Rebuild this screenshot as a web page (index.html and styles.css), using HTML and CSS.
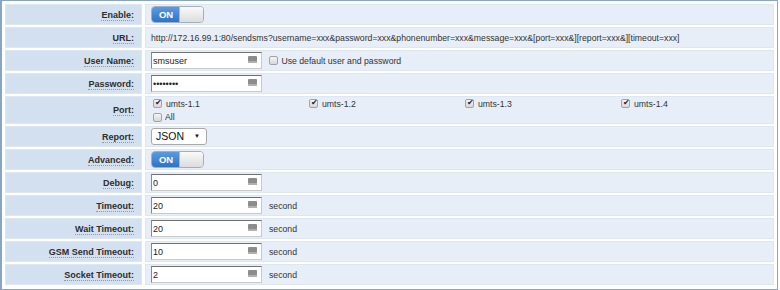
FILE: index.html
```html
<!DOCTYPE html>
<html lang="en">

<head>
  <meta charset="UTF-8" />
  <title>SMS HTTP API</title>

  <link rel="stylesheet" href="styles.css">
</head>

<body>
  <table class="settings">
    <tr>
      <th><span class="tip">Enable:</span></th>
      <td><span class="switch"><span class="on">ON</span><span class="knob"></span></span></td>
    </tr>
    <tr>
      <th><span class="tip">URL:</span></th>
      <td>http://172.16.99.1:80/sendsms?username=xxx&amp;password=xxx&amp;phonenumber=xxx&amp;message=xxx&amp;[port=xxx&amp;][report=xxx&amp;][timeout=xxx]</td>
    </tr>
    <tr>
      <th><span class="tip">User Name:</span></th>
      <td>
        <span class="field"><input type="text" value="smsuser" /><span class="kb"></span></span>
        <label class="check"><input type="checkbox" /> Use default user and password</label>
      </td>
    </tr>
    <tr>
      <th><span class="tip">Password:</span></th>
      <td><span class="field"><input type="password" value="smsuser1" /><span class="kb"></span></span></td>
    </tr>
    <tr class="tall">
      <th><span class="tip">Port:</span></th>
      <td>
        <div class="ports">
          <label class="check"><input type="checkbox" checked /> umts-1.1</label>
          <label class="check"><input type="checkbox" checked /> umts-1.2</label>
          <label class="check"><input type="checkbox" checked /> umts-1.3</label>
          <label class="check"><input type="checkbox" checked /> umts-1.4</label>
        </div>
        <label class="check"><input type="checkbox" /> All</label>
      </td>
    </tr>
    <tr>
      <th><span class="tip">Report:</span></th>
      <td><span class="select">JSON<span class="arrow">&#9660;</span></span></td>
    </tr>
    <tr>
      <th><span class="tip">Advanced:</span></th>
      <td><span class="switch"><span class="on">ON</span><span class="knob"></span></span></td>
    </tr>
    <tr>
      <th><span class="tip">Debug:</span></th>
      <td><span class="field"><input type="text" value="0" /><span class="kb"></span></span></td>
    </tr>
    <tr>
      <th><span class="tip">Timeout:</span></th>
      <td><span class="field"><input type="text" value="20" /><span class="kb"></span></span><span class="unit">second</span></td>
    </tr>
    <tr>
      <th><span class="tip">Wait Timeout:</span></th>
      <td><span class="field"><input type="text" value="20" /><span class="kb"></span></span><span class="unit">second</span></td>
    </tr>
    <tr>
      <th><span class="tip">GSM Send Timeout:</span></th>
      <td><span class="field"><input type="text" value="10" /><span class="kb"></span></span><span class="unit">second</span></td>
    </tr>
    <tr>
      <th><span class="tip">Socket Timeout:</span></th>
      <td><span class="field"><input type="text" value="2" /><span class="kb"></span></span><span class="unit">second</span></td>
    </tr>
  </table>
</body>

</html>
```

FILE: styles.css
```css
body {
  margin: 0;
  background: #fff;
  font-family: "Liberation Sans", Arial, sans-serif;
  font-size: 8.7px;
  color: #333;
}

.settings {
  width: 778px;
  table-layout: fixed;
  border: 1px solid #86a5c7;
  border-left-width: 2px;
  border-spacing: 3px 2px;
  padding: 1px 0 2px;
}

.settings th,
.settings td {
  height: 19px;
  border: 1px solid #dde7f2;
  padding: 0;
}

.settings th {
  width: 128px;
  background-color: #d2e0ef;
  text-align: right;
  padding-right: 7px;
  font-size: 9px;
  font-weight: bold;
  color: #2e2e2e;
}

.settings td {
  background-color: #e7eef7;
  padding-left: 5px;
  white-space: nowrap;
}

.settings .tall th,
.settings .tall td {
  height: 26px;
}

.tip {
  border-bottom: 1px dotted #999;
}

.switch {
  display: inline-flex;
  vertical-align: middle;
  height: 15px;
  border: 1px solid #9fb0c4;
  border-radius: 4px;
  overflow: hidden;
}

.switch .on {
  width: 27px;
  background: linear-gradient(#5a9be0, #2f73c7);
  color: #fff;
  font-weight: bold;
  font-size: 9.5px;
  line-height: 15px;
  padding-left: 1px;
  box-sizing: border-box;
  text-align: center;
}

.switch .knob {
  width: 23px;
  background: linear-gradient(#fafafa, #dcdcdc);
  border-left: 1px solid #b8b8b8;
}

.field {
  position: relative;
  display: inline-block;
  vertical-align: middle;
}

.field input {
  width: 111px;
  height: 17px;
  box-sizing: border-box;
  border: 1px solid #c9c9c9;
  border-top-color: #707070;
  border-left-color: #8a8a8a;
  background: #fff;
  font-family: "Liberation Sans", Arial, sans-serif;
  font-size: 9px;
  color: #222;
  padding: 0 1px;
  outline: none;
}

.field .kb {
  position: absolute;
  right: 5px;
  top: 4px;
  width: 9px;
  height: 7px;
  background: #8c8c8c;
  border-radius: 1px;
  box-shadow: inset 0 -2px 0 #b0b0b0;
}

.check {
  display: inline-flex;
  align-items: center;
  gap: 3px;
  vertical-align: middle;
}

.check input {
  appearance: none;
  width: 9px;
  height: 9px;
  margin: 0;
  border: 1px solid #a3a3a3;
  border-radius: 2px;
  background: linear-gradient(#f4f4f4, #d8d8d8);
  position: relative;
}

.check input:checked::after {
  content: "\2714";
  position: absolute;
  left: 1px;
  top: -2px;
  font-size: 8px;
  color: #222;
}

.field + .check {
  margin-left: 5px;
}

.ports {
  display: grid;
  grid-template-columns: repeat(4, 156px);
  padding-left: 2px;
  padding-top: 1px;
  margin-bottom: 3px;
}

.ports .check {
  gap: 4px;
}

.ports + .check {
  margin-left: 2px;
}

.select {
  position: relative;
  display: inline-block;
  vertical-align: middle;
  width: 56px;
  height: 17px;
  box-sizing: border-box;
  border: 1px solid #a9a9a9;
  border-radius: 3px;
  background: #fff;
  font-size: 10.5px;
  line-height: 15px;
  padding-left: 4px;
  color: #111;
}

.select .arrow {
  position: absolute;
  right: 6px;
  top: 0;
  font-size: 6px;
}

.unit {
  margin-left: 7px;
  vertical-align: middle;
}
```
